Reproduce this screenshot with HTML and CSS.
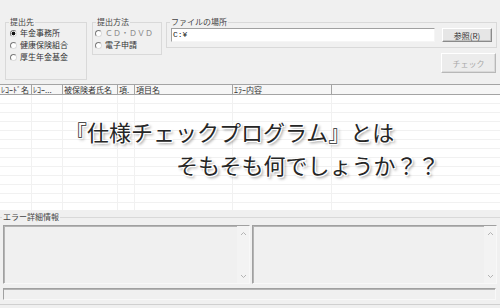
FILE: index.html
```html
<!DOCTYPE html>
<html lang="ja">
<head>
<meta charset="utf-8">
<link rel="stylesheet" href="styles.css">
</head>
<body>
<div class="win">
  <div class="top">
    <div class="grp g1">
      <div class="lg">提出先</div>
      <div class="opt"><span class="radio on"></span>年金事務所</div>
      <div class="opt"><span class="radio"></span>健康保険組合</div>
      <div class="opt"><span class="radio"></span>厚生年金基金</div>
    </div>
    <div class="grp g2">
      <div class="lg">提出方法</div>
      <div class="opt dis"><span class="radio"></span>ＣＤ・ＤＶＤ</div>
      <div class="opt"><span class="radio"></span>電子申請</div>
    </div>
    <div class="rcol">
      <div class="grp g3">
        <div class="lg">ファイルの場所</div>
        <div class="filerow">
          <div class="input">C:¥</div>
          <div class="btn ref">参照(R)</div>
        </div>
      </div>
      <div class="btn check">チェック</div>
    </div>
  </div>

  <div class="list">
    <div class="head cols">
      <div class="hc">ﾚｺｰﾄﾞ名</div>
      <div class="hc">ﾚｺｰ...</div>
      <div class="hc">被保険者氏名</div>
      <div class="hc">項.</div>
      <div class="hc">項目名</div>
      <div class="hc">ｴﾗｰ内容</div>
      <div class="hc last"></div>
    </div>
    <div class="rows cols">
      <div class="col"></div>
      <div class="col"></div>
      <div class="col"></div>
      <div class="col"></div>
      <div class="col"></div>
      <div class="col"></div>
      <div class="col last"></div>
    </div>
  </div>

  <div class="grp err">
    <div class="lg">エラー詳細情報</div>
    <div class="boxes">
      <div class="tbox left">
        <div class="sb">
          <svg width="7" height="5" viewBox="0 0 7 5"><path d="M1 4 L3.5 1.5 L6 4" fill="none" stroke="#b4b4b4" stroke-width="1"/></svg>
          <svg width="7" height="5" viewBox="0 0 7 5"><path d="M1 1 L3.5 3.5 L6 1" fill="none" stroke="#b4b4b4" stroke-width="1"/></svg>
        </div>
      </div>
      <div class="tbox right">
        <div class="sb">
          <svg width="7" height="5" viewBox="0 0 7 5"><path d="M1 4 L3.5 1.5 L6 4" fill="none" stroke="#b4b4b4" stroke-width="1"/></svg>
          <svg width="7" height="5" viewBox="0 0 7 5"><path d="M1 1 L3.5 3.5 L6 1" fill="none" stroke="#b4b4b4" stroke-width="1"/></svg>
        </div>
      </div>
    </div>
    <div class="status"></div>
  </div>

  <div class="overlay">
    <div class="l1">『仕様チェックプログラム』とは</div>
    <div class="l2">そもそも何でしょうか？？</div>
  </div>
</div>
</body>
</html>
```

FILE: styles.css
```css
* { box-sizing: border-box; }
html, body { margin: 0; padding: 0; }
body {
  width: 500px;
  height: 308px;
  overflow: hidden;
  background: #f0f0f0;
  font-family: "Noto Sans CJK JP", "Noto Sans", sans-serif;
  font-size: 8px;
  color: #333;
}
.win {
  position: relative;
  width: 500px;
  height: 308px;
}

/* group boxes */
.grp {
  border: 1px solid #d9d9d9;
}
.lg {
  width: fit-content;
  height: 10px;
  line-height: 10px;
  margin: -6px 0 0 3px;
  padding: 0 1px;
  background: #f0f0f0;
  color: #444;
}

/* top area */
.top {
  height: 84px;
  display: flex;
  align-items: flex-start;
  padding-top: 22px;
}
.g1 {
  margin-left: 5px;
  width: 82px;
  height: 58px;
}
.g2 {
  margin-left: 5px;
  width: 70px;
  height: 33px;
}
.opt {
  display: flex;
  align-items: center;
  height: 12px;
  line-height: 12px;
  color: #333;
  white-space: nowrap;
}
.g1 .opt { padding-left: 4px; }
.g2 .opt { padding-left: 2px; }
.opt.dis { color: #8a8a8a; }
.radio {
  width: 7px;
  height: 7px;
  border-radius: 50%;
  background: #fff;
  border: 1px solid;
  border-color: #7a7a7a #dcdcdc #dcdcdc #7a7a7a;
  margin-right: 3px;
  flex: none;
}
.radio.on {
  background: radial-gradient(circle, #111 0 1.6px, #fff 2.2px);
}

.rcol {
  margin-left: 4px;
  width: 331px;
  display: flex;
  flex-direction: column;
}
.g3 {
  height: 26px;
}
.g3 .lg { margin-left: 3px; }
.filerow {
  display: flex;
  margin-top: 1px;
  padding-left: 4px;
}
.input {
  width: 264px;
  height: 14px;
  background: #fff;
  border: 1px solid;
  border-color: #a0a0a0 #f5f5f5 #f5f5f5 #a0a0a0;
  font-family: "Liberation Mono", "Noto Sans CJK JP", monospace;
  font-size: 8px;
  line-height: 11px;
  padding-left: 1px;
  color: #222;
}
.btn {
  display: flex;
  align-items: center;
  justify-content: center;
  background: #e6e6e6;
  border: 1px solid;
  border-color: #fff #8a8a8a #8a8a8a #fff;
  box-shadow: inset -1px -1px #c4c4c4;
  color: #333;
}
.ref {
  margin-left: 7px;
  width: 50px;
  height: 14px;
}
.check {
  align-self: flex-end;
  margin-top: 5px;
  margin-right: 1px;
  width: 55px;
  height: 20px;
  background: #ececec;
  border-color: #fff #b8b8b8 #b8b8b8 #fff;
  box-shadow: inset -1px -1px #dadada;
  color: #a8a8a8;
}

/* list */
.list {
  height: 126px;
  background: #fff;
}
.cols {
  display: grid;
  grid-template-columns: 32px 31px 55px 17px 98px 99px 1fr;
}
.head {
  height: 11px;
  background: #f6f6f6;
  border-top: 1px solid #a4a4a4;
  border-bottom: 1px solid #a4a4a4;
}
.hc {
  border-right: 1px solid #a4a4a4;
  line-height: 9px;
  padding-left: 1px;
  white-space: nowrap;
  overflow: hidden;
  color: #333;
}
.hc.last { border-right: none; }
.rows {
  height: 115px;
  background: repeating-linear-gradient(to bottom, #fff 0 8px, #f1f1f1 8px 9px);
}
.col { border-right: 1px solid #f1f1f1; }
.col.last { border-right: none; }

/* error area */
.err {
  margin: 7px -3px 0 -3px;
  height: 88px;
  border-bottom-color: #d0d0d0;
}
.err .lg { margin-left: 4px; }
.boxes {
  display: flex;
  gap: 2px;
  margin: 3px 0 0 5px;
}
.tbox {
  height: 59px;
  background: #f0f0f0;
  border: 1px solid;
  border-color: #a0a0a0 #f8f8f8 #f8f8f8 #a0a0a0;
  box-shadow: inset 1px 1px #b4b4b4;
  display: flex;
  justify-content: flex-end;
}
.tbox.left { width: 247px; }
.tbox.right { width: 245px; }
.sb {
  width: 12px;
  height: 100%;
  background: #f3f3f3;
  display: flex;
  flex-direction: column;
  justify-content: space-between;
  align-items: center;
  padding: 5px 0 4px;
}
.sb svg { display: block; }
.status {
  margin: 4px 0 0 5px;
  width: 493px;
  height: 12px;
  border: 1px solid;
  border-color: #a0a0a0 #f8f8f8 #f8f8f8 #a0a0a0;
  box-shadow: inset 0 1px #b4b4b4;
}

/* overlay caption */
.overlay {
  position: absolute;
  left: 65px;
  top: 115px;
  font-family: "Noto Sans CJK JP", sans-serif;
  font-size: 22px;
  line-height: 33px;
  color: #262626;
  white-space: nowrap;
  text-shadow:
    0 0 1px #fff, 0 0 1px #fff, 0 0 2px #fff, 0 0 2px #fff,
    1px 1px 0 #fff, -1px -1px 0 #fff, 1px -1px 0 #fff, -1px 1px 0 #fff,
    2px 2px 3px rgba(0,0,0,0.45);
}
.l2 { margin-left: 111px; }
```
